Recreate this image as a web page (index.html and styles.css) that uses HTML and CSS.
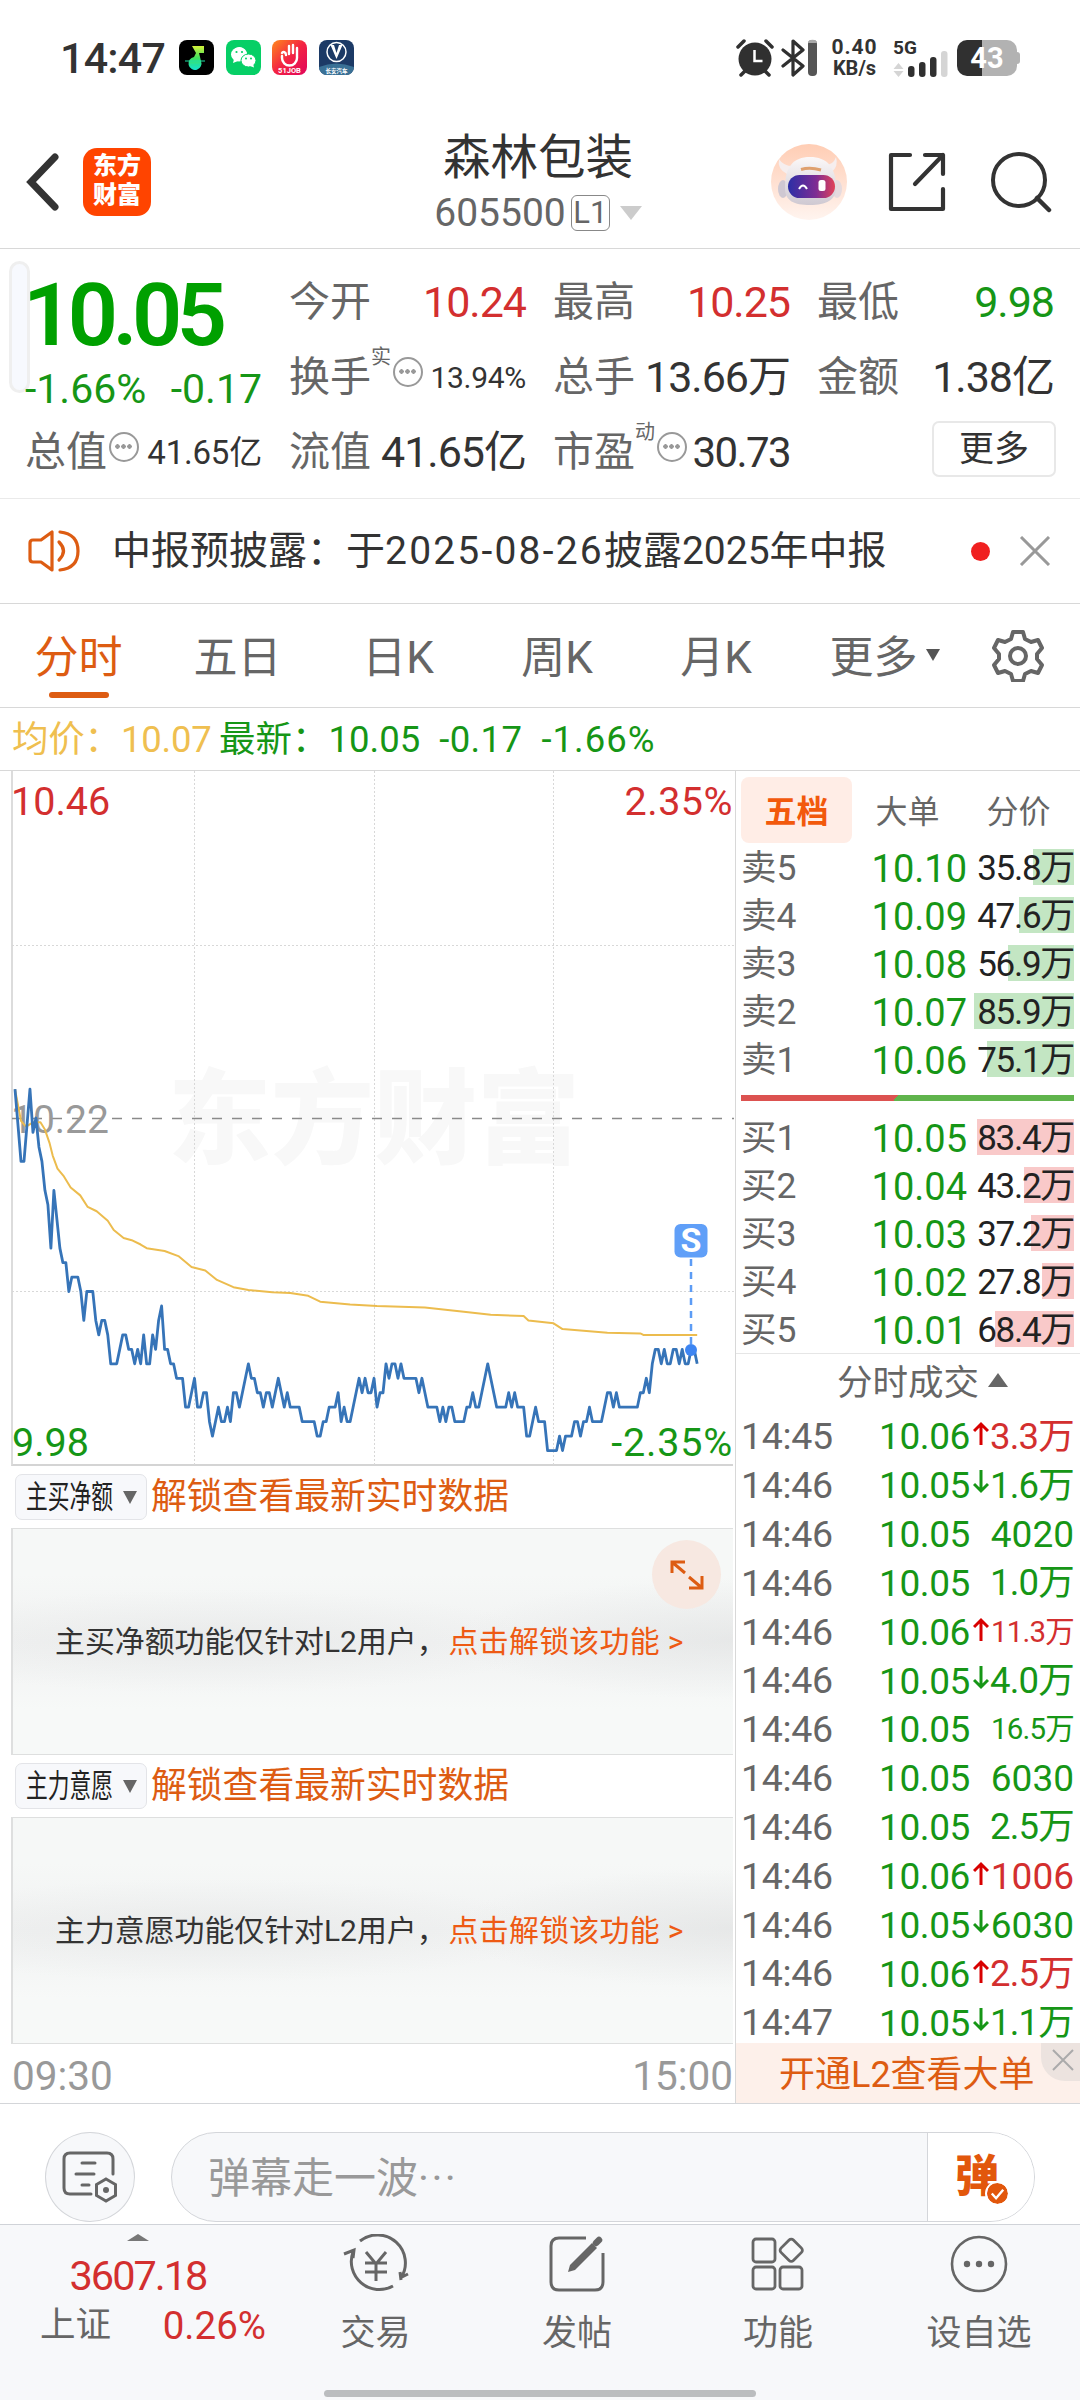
FILE: index.html
```html
<!DOCTYPE html>
<html lang="zh-CN">

<head>
  <meta charset="utf-8">
  <title>森林包装 605500</title>
  <meta name="viewport" content="width=1080">
  <link rel="stylesheet" href="styles.css">
</head>

<body>
  <!-- status bar -->
  <div class="status">
    <span class="clock">14:47</span>
    <div class="apps">
      <svg width="35" height="35" viewBox="0 0 35 35">
        <defs>
          <linearGradient id="note" x1="0" y1="0" x2="0" y2="1">
            <stop offset="0" stop-color="#d6f23a" />
            <stop offset=".5" stop-color="#3fe05c" />
            <stop offset="1" stop-color="#13e3d0" />
          </linearGradient>
        </defs>
        <rect width="35" height="35" rx="8" fill="#000" />
        <path d="M13 6h12v7h-5l2 8a6.500 6.500 0 1 1-7-4l2-4z" fill="url(#note)" />
        <path d="M6 21h20M12 25h9" stroke="#1ee0a5" stroke-width="1" />
      </svg>
      <svg width="35" height="35" viewBox="0 0 35 35">
        <rect width="35" height="35" rx="8" fill="#06cf66" />
        <path d="M7 23l1-4a7.500 7 0 1 1 4 2z" fill="#fff" />
        <ellipse cx="13" cy="14.500" rx="8" ry="7" fill="#fff" />
        <ellipse cx="22.500" cy="20.500" rx="7.500" ry="6.500" fill="#fff" stroke="#06cf66" stroke-width="1" />
        <path d="M24 26l4 1.500-1-4z" fill="#fff" />
        <g fill="#06cf66">
          <circle cx="10.500" cy="12" r="1.100" />
          <circle cx="16" cy="12" r="1.100" />
          <circle cx="20" cy="18.500" r="1" />
          <circle cx="25" cy="18.500" r="1" />
        </g>
      </svg>
      <svg width="35" height="35" viewBox="0 0 35 35">
        <defs>
          <linearGradient id="job" x1="0" y1="0" x2="1" y2="1">
            <stop offset="0" stop-color="#ff8a1c" />
            <stop offset=".5" stop-color="#f32343" />
            <stop offset="1" stop-color="#e0065c" />
          </linearGradient>
        </defs>
        <rect width="35" height="35" rx="8" fill="url(#job)" />
        <path d="M10 16v2a7.500 7.500 0 0 0 15 0V8M21 13V5M17 14V6M14 15c0-3-3-4-4-2" fill="none" stroke="#fff"
          stroke-width="2.400" stroke-linecap="round" />
        <text class="app-job" x="17.500" y="32.500">51JOB</text>
      </svg>
      <svg width="35" height="35" viewBox="0 0 35 35">
        <rect width="35" height="35" rx="8" fill="#1c3a66" />
        <path d="M0 27q17-7 35 0a8 8 0 0 1-8 8H8a8 8 0 0 1-8-8z" fill="#3a7196" />
        <circle cx="17.500" cy="12" r="9.500" fill="none" stroke="#fff" stroke-width="1.500" />
        <path d="M11.500 5l6 14 6-14h-3.500l-2.500 8-2.500-8z" fill="#fff" />
        <text class="app-car" x="17.500" y="33">长安汽车</text>
      </svg>
    </div>
    <div class="signals">
      <svg width="38" height="38" viewBox="0 0 38 38">
        <circle cx="19" cy="20" r="16.500" fill="#303030" />
        <path d="M2 8l6-6M36 8l-6-6M5 36l4-4M33 36l-4-4" stroke="#303030" stroke-width="3.500" stroke-linecap="round" />
        <path d="M18.500 11v11h8" fill="none" stroke="#fff" stroke-width="2.500" />
      </svg>
      <svg class="bt" width="37" height="38" viewBox="0 0 37 38">
        <path d="M2 11l20 16-10 9V2l10 9L2 27" fill="none" stroke="#303030" stroke-width="3.200"
          stroke-linejoin="round" stroke-linecap="round" />
        <rect x="27" y="1" width="9" height="36" rx="4" fill="#555" />
        <path d="M27 4a4 3 0 0 1 9 0z" fill="#aaa" />
      </svg>
      <div class="speed"><b>0.40</b><b>KB/s</b></div>
      <svg class="cell" width="56" height="38" viewBox="0 0 56 38">
        <text class="cell-5g" x="0" y="15">5G</text>
        <path d="M.500 30l5-6 5 6zM.500 32l5 6 5-6z" fill="#d5d5d5" />
        <g fill="#303030">
          <rect x="15" y="27" width="6.500" height="11" rx="3" />
          <rect x="26" y="23" width="6.500" height="15" rx="3" />
          <rect x="37" y="18" width="6.500" height="20" rx="3" />
        </g>
        <rect x="48" y="12" width="6.500" height="26" rx="3" fill="#d5d5d5" />
      </svg>
      <div class="battery">43</div>
    </div>
  </div>

  <!-- title bar -->
  <header>
    <svg class="back" width="34" height="58" viewBox="0 0 34 58">
      <path d="M29 4L5 29l24 25" fill="none" stroke="#333" stroke-width="7" stroke-linecap="round" />
    </svg>
    <div class="logo">东方<br>财富</div>
    <div class="title">
      <h1>森林包装</h1>
      <div class="code">605500<span class="level">L1</span><i class="down"></i></div>
    </div>
    <div class="tools">
      <svg width="76" height="76" viewBox="0 0 76 76">
        <defs>
          <linearGradient id="halo" x1="0" y1="0" x2="0" y2="1">
            <stop offset="0" stop-color="#ffcdb4" />
            <stop offset="1" stop-color="#fff4ef" />
          </linearGradient>
          <linearGradient id="visor">
            <stop offset="0" stop-color="#2c2fa6" />
            <stop offset=".6" stop-color="#7e2c93" />
            <stop offset="1" stop-color="#e24258" />
          </linearGradient>
          <linearGradient id="shell" x1="0" y1="0" x2="0" y2="1">
            <stop offset="0" stop-color="#fbf8f8" />
            <stop offset="1" stop-color="#cfc9d2" />
          </linearGradient>
        </defs>
        <circle cx="38" cy="38" r="38" fill="url(#halo)" />
        <path d="M8 15q-2 10 8 15l8-8q-11 1-16-7zM65 13q3 9-5 16l-8-8q10 1 13-8z" fill="#f6eeee" />
        <ellipse cx="12" cy="45" rx="5" ry="9" fill="#cfc8d2" />
        <ellipse cx="66" cy="45" rx="5" ry="9" fill="#e5dade" />
        <path d="M14 44c0-21 8-31 25-31s26 10 26 31c0 12-10 17-26 17s-25-4-25-17z" fill="url(#shell)" />
        <path d="M30 25.500q9-2.500 20 .500" fill="none" stroke="#dfa06e" stroke-width="3" />
        <rect x="17" y="31" width="47" height="23" rx="11.500" fill="url(#visor)" />
        <path d="M28 45q4-7 8 0" fill="none" stroke="#fff" stroke-width="2" />
        <rect x="47.500" y="36" width="7" height="11" rx="2.500" fill="#fff" />
      </svg>
      <svg width="58" height="60" viewBox="0 0 58 60">
        <path d="M22 3H3v54h52V37M37 3h18v19M55 3L27 32" fill="none" stroke="#333" stroke-width="4.200"
          stroke-linejoin="round" stroke-linecap="round" />
      </svg>
      <svg class="search" width="62" height="62" viewBox="0 0 62 62">
        <circle cx="29" cy="29" r="26" fill="none" stroke="#333" stroke-width="4" />
        <path d="M47 47l12 12" stroke="#333" stroke-width="4.500" stroke-linecap="round" />
      </svg>
    </div>
  </header>

  <!-- quote -->
  <section class="quote">
    <div class="drawer-handle"></div>
    <div class="now">
      <strong>10.05</strong>
      <div><span>-1.66%</span><span>-0.17</span></div>
    </div>
    <div class="cell-q"><label>今开</label><span class="val up">10.24</span></div>
    <div class="cell-q"><label>最高</label><span class="val up">10.25</span></div>
    <div class="cell-q"><label>最低</label><span class="val dn">9.98</span></div>
    <div class="cell-q"><label>换手<sup>实</sup></label><i class="dots"></i><span class="val pct">13.94%</span></div>
    <div class="cell-q"><label>总手</label><span class="val">13.66万</span></div>
    <div class="cell-q"><label>金额</label><span class="val">1.38亿</span></div>
    <div class="cell-q"><label>总值</label><i class="dots"></i><span class="val small">41.65亿</span></div>
    <div class="cell-q"><label>流值</label><span class="val">41.65亿</span></div>
    <div class="cell-q"><label>市盈<sup>动</sup></label><i class="dots"></i><span class="val pe">30.73</span></div>
    <button class="more">更多</button>
  </section>

  <!-- announcement -->
  <div class="notice">
    <svg width="52" height="44" viewBox="0 0 52 44">
      <g fill="none" stroke="#dd5c12" stroke-width="3.200" stroke-linejoin="round" stroke-linecap="round">
        <path d="M24 3v38L13 33H5q-3 0-3-3V14q0-3 3-3h8z" />
        <path d="M31 13q9 9 0 18M32 3q18 2 18 19T32 41" />
      </g>
    </svg>
    <p>中报预披露：于<span>2025-08-26</span>披露2025年中报</p>
    <i class="dot"></i>
    <svg class="close" width="32" height="30" viewBox="0 0 32 30">
      <path d="M2 1l28 28M30 1L2 29" stroke="#999" stroke-width="3" />
    </svg>
  </div>

  <!-- period tabs -->
  <nav class="tabs">
    <a class="on">分时</a>
    <a>五日</a>
    <a>日K</a>
    <a>周K</a>
    <a>月K</a>
    <a>更多<i></i></a>
    <svg width="52" height="52" viewBox="0 0 52 52">
      <g fill="none" stroke="#666" stroke-width="4" stroke-linejoin="round">
        <path d="M21 2h10l2 7 6 3 7-2 4 8-5 6v5l5 6-4 8-7-2-6 3-2 7H21l-2-7-6-3-7 2-4-8 5-6v-5l-5-6 4-8 7 2 6-3z" />
        <circle cx="26" cy="26" r="8" />
      </g>
    </svg>
  </nav>

  <div class="summary">
    <span class="avg">均价：10.07</span>
    <span>最新：10.05</span>
    <span class="chg">-0.17</span>
    <span class="chg rate">-1.66%</span>
  </div>

  <main>
    <div class="left">
      <!-- 1 unit on x = 1 minute, 1 unit on y = 0.01 -->
      <div class="chart">
        <svg width="722" height="694" viewBox="0 0 722 694">
          <text class="watermark" x="362" y="385">东方财富</text>
          <path d="M182.500 0v694M362.500 0v694M541.500 0v694M0 174.500h722M0 520.500h722" stroke="#d8d8d8"
            stroke-dasharray="2 2" />
          <path d="M0 347.500h722" stroke="#8a8a8a" stroke-width="1.600" stroke-dasharray="10 10" />
          <text class="mid" x="-1" y="362">10.22</text>
          <g transform="translate(3 347) scale(2.992 14.460)" fill="none" stroke-linejoin="round">
            <polyline vector-effect="non-scaling-stroke" stroke="#ecbc4e" stroke-width="2"
              points="0,-2 2,.2 3.700,.6 6,.3 8.500,.3 10,.8 11.500,1.700 12.600,2.600 14.200,3.500 16.200,4 18.600,4.800 21.800,5.350 24.300,6.150 27.300,6.450 31,7.100 33,7.750 36.300,8.300 39,8.450 42,8.750 44,9 50,9.200 54.600,9.550 59,10.300 63.600,10.550 67.500,11.200 73,11.700 78,11.900 86,12.050 92,12.100 98,12.300 102,12.700 112,12.900 121,13 137,13.100 150,13.400 159,13.600 170,13.700 171.600,14 180,14.200 183,14.600 198,14.850 209,14.900 210,15 228,15" />
            <polyline vector-effect="non-scaling-stroke" stroke="#3674b8" stroke-width="2.800"
              points="0,-2 2,3 3,3 5,-2 6,1 7,0 8,2 9,3 10,5 11,6 12,9 13,5 14,7 15,9 16,10 17,10 18,12 19,11 21,11 22,12 23,14 24,12 26,12 27,14 28,15 29,14 30,14 31,15 32,17 34,17 35,16 36,15 37,15 38,16 39,16 40,17 41,16 42,17 43,15 44,17 45,17 46,15 47,16 48,14 49,13 50,16 51,16 52,17 53,17 54,18 56,18 57,20 58,20 59,19 60,18 61,20 62,20 63,19 64,19 65,21 66,22 67,21 68,20 69,21 70,21 71,20 72,21 73,19 74,19 75,20 76,19 77,18 78,17 79,18 80,18 81,19 82,19 83,20 84,19 85,19 86,20 87,19 88,18 89,19 90,20 91,19 92,20 95,20 96,21 100,21 101,22 102,22 103,21 104,21 105,20 107,20 108,19 109,21 110,20 111,21 112,21 113,20 114,19 115,18 116,19 117,18 118,19 119,19 120,18 121,20 122,19 123,19 124,17 125,18 126,17 127,17 128,18 129,17 130,18 134,18 135,19 136,18 137,19 138,20 141,20 142,21 143,20 144,21 145,20 146,20 147,21 150,21 151,20 152,20 153,19 154,20 155,20 156,19 157,18 158,17 159,18 160,19 161,20 164,20 165,19 166,20 167,19 168,20 170,20 171,22 172,22 173,21 174,20 175,21 177,21 178,23 181,23 182,22 183,23 184,22 186,22 187,21 188,21 189,22 190,21 191,21 192,20 193,21 196,21 197,20 198,19 199,19 200,20 201,19 202,20 208,20 209,19 210,19 211,18 212,19 213,17 214,16 215,16 216,17 217,16 218,17 219,17 220,16 221,16 222,17 223,16 224,17 225,17 226,16 227,16 228,17" />
          </g>
          <path d="M679 488v88" stroke="#5c9cf5" stroke-width="2.500" stroke-dasharray="7 6" />
          <circle cx="679" cy="579" r="6" fill="#3d85f2" />
          <rect x="662.500" y="453" width="33" height="33.500" rx="6" fill="#609ff8" />
          <text class="sell" x="679" y="480.500">S</text>
        </svg>
        <span class="tl up">10.46</span>
        <span class="tr up">2.35%</span>
        <span class="bl dn">9.98</span>
        <span class="br dn">-2.35%</span>
      </div>

      <div class="sub-head">
        <button><span>主买净额</span><i></i></button>
        <a>解锁查看最新实时数据</a>
      </div>
      <div class="locked">
        <p>主买净额功能仅针对L2用户，<a>点击解锁该功能 &gt;</a></p>
        <div class="expand">
          <svg width="36" height="38" viewBox="0 0 36 38">
            <path d="M3 17V6h13M3 6l13 11M33 20v12H20M33 32L20 21" fill="none" stroke="#dd5c12" stroke-width="3" />
          </svg>
        </div>
      </div>

      <div class="sub-head">
        <button><span>主力意愿</span><i></i></button>
        <a>解锁查看最新实时数据</a>
      </div>
      <div class="locked">
        <p>主力意愿功能仅针对L2用户，<a>点击解锁该功能 &gt;</a></p>
      </div>

      <div class="axis"><span>09:30</span><span>15:00</span></div>
    </div>

    <aside>
      <div class="book-tabs"><a class="on">五档</a><a>大单</a><a>分价</a></div>
      <div class="book sells">
        <div><label>卖5</label><b>10.10</b><span><i style="width:41px"></i>35.8万</span></div>
        <div><label>卖4</label><b>10.09</b><span><i style="width:55px"></i>47.6万</span></div>
        <div><label>卖3</label><b>10.08</b><span><i style="width:66px"></i>56.9万</span></div>
        <div><label>卖2</label><b>10.07</b><span><i style="width:100px"></i>85.9万</span></div>
        <div><label>卖1</label><b>10.06</b><span><i style="width:87px"></i>75.1万</span></div>
      </div>
      <div class="ratio"></div>
      <div class="book buys">
        <div><label>买1</label><b>10.05</b><span><i style="width:97px"></i>83.4万</span></div>
        <div><label>买2</label><b>10.04</b><span><i style="width:50px"></i>43.2万</span></div>
        <div><label>买3</label><b>10.03</b><span><i style="width:43px"></i>37.2万</span></div>
        <div><label>买4</label><b>10.02</b><span><i style="width:32px"></i>27.8万</span></div>
        <div><label>买5</label><b>10.01</b><span><i style="width:79px"></i>68.4万</span></div>
      </div>
      <div class="deals-head">分时成交<i></i></div>
      <div class="deals">
        <div><label>14:45</label><b>10.06</b><svg class="a-up"><use href="#arrow" /></svg><span class="up">3.3万</span></div>
        <div><label>14:46</label><b>10.05</b><svg class="a-dn"><use href="#arrow" /></svg><span>1.6万</span></div>
        <div><label>14:46</label><b>10.05</b><svg></svg><span class="num">4020</span></div>
        <div><label>14:46</label><b>10.05</b><svg></svg><span>1.0万</span></div>
        <div><label>14:46</label><b>10.06</b><svg class="a-up"><use href="#arrow" /></svg><span class="up fit">11.3万</span></div>
        <div><label>14:46</label><b>10.05</b><svg class="a-dn"><use href="#arrow" /></svg><span>4.0万</span></div>
        <div><label>14:46</label><b>10.05</b><svg></svg><span class="fit">16.5万</span></div>
        <div><label>14:46</label><b>10.05</b><svg></svg><span class="num">6030</span></div>
        <div><label>14:46</label><b>10.05</b><svg></svg><span>2.5万</span></div>
        <div><label>14:46</label><b>10.06</b><svg class="a-up"><use href="#arrow" /></svg><span class="up num">1006</span></div>
        <div><label>14:46</label><b>10.05</b><svg class="a-dn"><use href="#arrow" /></svg><span class="num">6030</span></div>
        <div><label>14:46</label><b>10.06</b><svg class="a-up"><use href="#arrow" /></svg><span class="up">2.5万</span></div>
        <div><label>14:47</label><b>10.05</b><svg class="a-dn"><use href="#arrow" /></svg><span>1.1万</span></div>
      </div>
      <div class="promo">
        开通L2查看大单
        <div class="promo-x">
          <svg width="22" height="22" viewBox="0 0 22 22">
            <path d="M1 1l20 20M21 1L1 21" stroke="#aaa" stroke-width="2" />
          </svg>
        </div>
      </div>
    </aside>
  </main>

  <!-- danmaku bar -->
  <div class="comment">
    <div class="comment-set">
      <svg width="56" height="52" viewBox="0 0 56 52">
        <g fill="none" stroke="#666" stroke-width="3" stroke-linecap="round">
          <path d="M29 43H8q-6 0-6-6V8q0-6 6-6h37q6 0 6 6v15" />
          <path d="M20 12h13M14 23h18M20 34h7" />
          <path d="M44 28l9.500 5.500v11L44 50l-9.500-5.500v-11z" />
        </g>
        <circle cx="44" cy="39" r="3" fill="#666" />
      </svg>
    </div>
    <div class="comment-box">
      <p>弹幕走一波<span>···</span></p>
      <div class="send">
        弹
        <svg width="22" height="22" viewBox="0 0 22 22">
          <circle cx="11" cy="11" r="11" fill="#e2570c" />
          <path d="M5 11l4.500 5L17 7" fill="none" stroke="#fff" stroke-width="2.500" />
        </svg>
      </div>
    </div>
  </div>

  <!-- bottom bar -->
  <footer>
    <div class="index">
      <i></i>
      <strong>3607.18</strong>
      <div><span>上证</span><b>0.26%</b></div>
    </div>
    <div class="item">
      <svg width="66" height="60" viewBox="0 0 66 60">
        <g fill="none" stroke="#666" stroke-width="3">
          <path d="M17 7a28 28 0 0 1 41 37M58 46l-1-8M57 44l8-4" />
          <path d="M50 52A28 28 0 0 1 10 18M1 20l10-4-1 8" />
          <path d="M23 18l10 12 10-12M33 30v17M22 29h22M22 38h22" />
        </g>
      </svg>
      交易
    </div>
    <div class="item">
      <svg width="56" height="60" viewBox="0 0 56 60">
        <path d="M37 4H10q-8 0-8 8v36q0 8 8 8h36q8 0 8-8V19" fill="none" stroke="#666" stroke-width="3" />
        <path d="M19 38l2-7 22-22 5 5-22 22z" fill="#666" />
        <path d="M47 9l3-3" stroke="#666" stroke-width="6.500" stroke-linecap="round" />
      </svg>
      发帖
    </div>
    <div class="item">
      <svg width="56" height="60" viewBox="0 0 56 60">
        <g fill="none" stroke="#666" stroke-width="2.800">
          <rect x="3" y="5" width="22" height="23" rx="3" />
          <rect x="3" y="33" width="22" height="22" rx="3" />
          <rect x="30" y="33" width="22" height="22" rx="3" />
          <rect x="32.500" y="7.500" width="17.500" height="17.500" rx="3" transform="rotate(45 41.250 16.250)" />
        </g>
      </svg>
      功能
    </div>
    <div class="item">
      <svg width="58" height="60" viewBox="0 0 58 60">
        <circle cx="29" cy="30" r="27" fill="none" stroke="#666" stroke-width="2.600" />
        <g fill="#666">
          <circle cx="17" cy="30" r="3.200" />
          <circle cx="29" cy="30" r="3.200" />
          <circle cx="41" cy="30" r="3.200" />
        </g>
      </svg>
      设自选
    </div>
    <div class="home-bar"></div>
  </footer>

  <svg class="defs">
    <symbol id="arrow" viewBox="0 0 16 24">
      <path d="M8 24V3M1 10l7-7 7 7" fill="none" stroke="currentColor" stroke-width="3" />
    </symbol>
  </svg>
</body>

</html>
```
FILE: styles.css
```css
* {
  box-sizing: border-box;
}

body {
  margin: 0;
  width: 1080px;
  height: 2400px;
  overflow: hidden;
  display: flex;
  flex-direction: column;
  background-color: #fff;
  color: #333;
  font-family: Roboto, "Noto Sans CJK SC", sans-serif;
  line-height: 1;
}

h1, p, sup {
  margin: 0;
  font-weight: normal;
}

i {
  display: block;
  flex-shrink: 0;
}

svg {
  display: block;
  flex-shrink: 0;
}

button {
  font-family: inherit;
  line-height: 1;
  padding: 0;
}

.defs {
  position: absolute;
  width: 0;
  height: 0;
}

.up {
  color: #d32f2f;
}

.dn {
  color: #169616;
}

/* status bar */
.status {
  height: 115px;
  flex-shrink: 0;
  display: flex;
  align-items: center;
  padding: 0 63px 0 60px;
}

.clock {
  width: 119px;
  padding-top: 2px;
  font-size: 43px;
  font-weight: 500;
  letter-spacing: -0.8px;
}

.apps {
  display: flex;
  gap: 11.700px;
}

.app-job {
  font-size: 7.500px;
  font-weight: bold;
  fill: #fff;
  text-anchor: middle;
}

.app-car {
  font-size: 5.500px;
  font-weight: bold;
  fill: #fff;
  text-anchor: middle;
}

.signals {
  margin-left: auto;
  display: flex;
  align-items: center;
}

.bt {
  margin-left: 7px;
}

.speed {
  width: 49px;
  margin: 0 14px 0 12px;
  height: 42px;
  display: flex;
  flex-direction: column;
  align-items: center;
  font-size: 20px;
  line-height: 21px;
}

.speed b:first-child {
  font-size: 21px;
  letter-spacing: 1px;
}

.cell {
  overflow: visible;
}

.cell-5g {
  font-size: 19px;
  font-weight: bold;
  fill: #303030;
}

.battery {
  margin-left: 8px;
  width: 60px;
  height: 36px;
  border-radius: 10px;
  background: linear-gradient(90deg, #303030 25px, #b2b2b2 25px);
  color: #fff;
  font-size: 29px;
  font-weight: bold;
  line-height: 37px;
  text-align: center;
  position: relative;
}

.battery::after {
  content: "";
  position: absolute;
  right: -3px;
  top: 12px;
  width: 4px;
  height: 12px;
  border-radius: 0 3px 3px 0;
  background-color: #b2b2b2;
}

/* title bar */
header {
  height: 134px;
  flex-shrink: 0;
  display: flex;
  align-items: center;
  padding: 0 28px 0 26px;
  border-bottom: 1px solid #d8d8d8;
}

.logo {
  width: 68px;
  height: 68px;
  margin-left: 23px;
  border-radius: 14px;
  background-color: #ff4400;
  color: #fff;
  font-size: 24px;
  font-weight: 900;
  line-height: 29px;
  text-align: center;
  padding-top: 4px;
}

.title {
  flex: 1;
  display: flex;
  flex-direction: column;
  align-items: center;
  padding-right: 8px;
  padding-left: 162px;
}

h1 {
  font-size: 47.500px;
  line-height: 58px;
}

.code {
  display: flex;
  align-items: center;
  height: 48px;
  padding-top: 5px;
  font-size: 39px;
  color: #666;
}

.level {
  width: 39px;
  height: 36px;
  margin-left: 5px;
  border: 1.500px solid #888;
  border-radius: 6px;
  font-size: 31px;
  line-height: 34px;
  text-align: center;
}

.down {
  margin-left: 10px;
  border: 11px solid transparent;
  border-top: 14px solid #ccc;
  border-bottom: 0;
}

.tools {
  display: flex;
  align-items: center;
  gap: 41px;
  margin-left: auto;
}

.search {
  margin-left: 3px;
}

/* quote */
.quote {
  position: relative;
  height: 250px;
  flex-shrink: 0;
  display: grid;
  grid-template-columns: repeat(4, 237px);
  grid-template-rows: repeat(3, 75px);
  column-gap: 27px;
  padding: 16px 25px 0;
  border-bottom: 1px solid #eaeaea;
}

.drawer-handle {
  position: absolute;
  left: 9px;
  top: 12px;
  width: 21px;
  height: 132px;
  border: 3px solid #efefef;
  border-radius: 11px;
  background-color: #f7f9fe;
}

.now {
  grid-row: span 2;
  position: relative;
  color: #00a000;
}

.now strong {
  display: block;
  height: 100px;
  font-size: 88px;
  font-weight: 600;
  line-height: 100px;
  letter-spacing: -5.500px;
  margin-left: -2px;
}

.now div {
  display: flex;
  justify-content: space-between;
  padding-top: 4px;
  font-size: 41px;
  color: #169616;
}

.cell-q {
  display: flex;
  align-items: center;
}

.cell-q label {
  position: relative;
  flex-shrink: 0;
  font-size: 41px;
  color: #666;
  white-space: nowrap;
}

.cell-q sup {
  position: absolute;
  left: 82px;
  top: -10px;
  font-size: 20px;
  line-height: 20px;
}

.val {
  margin-left: auto;
  font-size: 43px;
  letter-spacing: -1px;
  white-space: nowrap;
}

.val.small {
  font-size: 33px;
  letter-spacing: -0.2px;
}

.val.pct {
  font-size: 30px;
  letter-spacing: -0.3px;
}

.val.pe {
  font-size: 42px;
  letter-spacing: -1.600px;
}

.dots {
  width: 30px;
  height: 30px;
  margin-left: 2px;
  margin-bottom: 11px;
  border: 2.500px solid #999;
  border-radius: 50%;
  background: radial-gradient(circle at 6.500px 12.500px, #999 2px, transparent 2.500px),
    radial-gradient(circle at 12.500px 12.500px, #999 2px, transparent 2.500px),
    radial-gradient(circle at 18.500px 12.500px, #999 2px, transparent 2.500px);
}

label:has(sup)+.dots {
  margin-left: 22px;
}

.more {
  width: 124px;
  height: 56px;
  margin-left: 115px;
  margin-bottom: 7px;
  align-self: center;
  border: 2px solid #e8e8e8;
  border-radius: 7px;
  background-color: #fff;
  color: #333;
  font-size: 35px;
}

/* announcement */
.notice {
  height: 105px;
  flex-shrink: 0;
  display: flex;
  align-items: center;
  padding: 0 29px 0 28px;
  border-bottom: 1px solid #d8d8d8;
}

.notice p {
  margin-left: 32px;
  padding-top: 1px;
  font-size: 39px;
  white-space: nowrap;
}

.notice p span {
  letter-spacing: 2.200px;
}

.dot {
  width: 19px;
  height: 19px;
  margin-left: auto;
  border-radius: 50%;
  background-color: #f02020;
}

.close {
  margin-left: 29px;
}

/* period tabs */
.tabs {
  height: 104px;
  flex-shrink: 0;
  display: grid;
  grid-template-columns: 157px 161px 160px 158px 160px 177px 1fr;
  align-items: center;
  border-bottom: 1px solid #d8d8d8;
  color: #666;
  font-size: 44px;
}

.tabs a {
  position: relative;
  display: flex;
  align-items: center;
  justify-content: center;
  padding-top: 5px;
}

.tabs a.on {
  color: #dd5c12;
}

.tabs a.on::after {
  content: "";
  position: absolute;
  left: 49px;
  top: 61px;
  width: 60px;
  height: 6px;
  border-radius: 3px;
  background-color: #dd5c12;
}

.tabs i {
  margin-left: 8px;
  margin-bottom: 7px;
  border: 7.500px solid transparent;
  border-top: 12px solid #555;
  border-bottom: 0;
}

.tabs svg {
  margin-left: 19px;
}

.summary {
  height: 63px;
  flex-shrink: 0;
  display: flex;
  align-items: center;
  padding: 3px 0 0 12px;
  border-bottom: 1px solid #d8d8d8;
  color: #169616;
  font-size: 36.500px;
}

.summary .avg {
  width: 207px;
  letter-spacing: -0.2px;
  color: #efbf50;
}

.summary .chg {
  margin-left: 19px;
  letter-spacing: 0.4px;
}

.summary .rate {
  letter-spacing: 1px;
}

main {
  height: 1333px;
  flex-shrink: 0;
  display: flex;
  border-bottom: 1px solid #d4d6d9;
}

.left {
  width: 735px;
  padding-left: 11px;
}

.chart {
  position: relative;
  width: 722px;
  height: 695px;
  border-left: 2px solid #dcdcdc;
  border-bottom: 2px solid #d4d4d4;
  font-size: 39.500px;
}

.chart svg {
  margin-left: -1px;
  overflow: visible;
}

.chart span {
  position: absolute;
}

.tl {
  left: -2px;
  top: 11px;
}

.tr {
  right: 0;
  top: 11px;
  letter-spacing: 0.5px;
}

.bl {
  left: -1px;
  bottom: 2px;
}

.br {
  right: 0;
  bottom: 2px;
  letter-spacing: 0.8px;
}

.watermark {
  font-size: 103px;
  font-weight: 900;
  fill: #f8f8f8;
  text-anchor: middle;
}

.mid {
  font-size: 39px;
  fill: #999;
}

.sell {
  font-size: 34px;
  font-weight: bold;
  fill: #fff;
  text-anchor: middle;
}

.sub-head {
  height: 62px;
  display: flex;
  align-items: center;
  padding-left: 4px;
  color: #dd5c12;
  font-size: 35.800px;
}

.sub-head a {
  padding-top: 2px;
}

.sub-head button {
  width: 132px;
  height: 46px;
  display: flex;
  align-items: center;
  padding-left: 10px;
  margin-right: 4px;
  border: 1px solid #e3e4e8;
  border-radius: 7px;
  background-color: #f7f8fb;
}

/* four characters squeezed into the tag */
.sub-head button span {
  width: 97px;
  font-size: 32px;
  color: #222;
  white-space: nowrap;
  transform: scaleX(0.68);
  transform-origin: left;
}

.sub-head button i {
  border: 7.500px solid transparent;
  border-top: 13px solid #666;
  border-bottom: 0;
}

.locked {
  position: relative;
  width: 722px;
  height: 227px;
  display: flex;
  align-items: center;
  padding-left: 42px;
  border: 1.500px solid #dedfdf;
  border-left-width: 2px;
  border-right: 0;
  background: radial-gradient(ellipse 340px 52px at 28% 50%, rgba(215, 217, 217, 0.320), transparent),
    radial-gradient(ellipse 280px 60px at 100% 49%, rgba(215, 217, 217, 0.400), transparent),
    linear-gradient(#f6f8f7 20%, #f1f2f2 50%, #f7f9f8 80%);
}

.locked p {
  font-size: 29.900px;
  white-space: nowrap;
}

.locked a {
  margin-left: 2px;
  letter-spacing: 0.3px;
  color: #ee5a14;
}

.expand {
  position: absolute;
  right: 12px;
  top: 11px;
  width: 69px;
  height: 69px;
  display: flex;
  align-items: center;
  justify-content: center;
  border-radius: 50%;
  background-color: #f7e8e1;
}

.axis {
  height: 60px;
  display: flex;
  align-items: center;
  justify-content: space-between;
  padding: 4px 2px 0 1px;
  color: #999;
  font-size: 40.500px;
}

/* order book */
aside {
  width: 345px;
  border-left: 1px solid #d8d8d8;
}

.book-tabs {
  display: flex;
  padding: 6px 0 0 5px;
  font-size: 32px;
  color: #666;
}

.book-tabs a {
  width: 111px;
  height: 66px;
  line-height: 70px;
  text-align: center;
  border-radius: 8px;
}

.book-tabs .on {
  background-color: #ffede6;
  color: #f2590c;
  font-weight: bold;
}

.book {
  padding: 0 6px 0 5px;
}

.book div,
.deals div {
  display: flex;
  align-items: center;
  height: 48px;
  color: #666;
}

.book label {
  width: 110px;
  padding-top: 3px;
  font-size: 35.500px;
}

.book b,
.deals b {
  width: 116px;
  padding-top: 3px;
  text-align: right;
  color: #169616;
  font-size: 38px;
  font-weight: normal;
}

.book span {
  position: relative;
  z-index: 0;
  width: 107px;
  height: 36px;
  line-height: 39px;
  text-align: right;
  color: #222;
  font-size: 35px;
  letter-spacing: -1.300px;
}

/* volume bar behind the size */
.book span i {
  position: absolute;
  z-index: -1;
  right: 0;
  top: 0;
  height: 36px;
}

.sells {
  height: 240px;
}

.sells i {
  background-color: #c3e6c3;
}

.buys i {
  background-color: #f9c9c9;
}

.ratio {
  height: 6px;
  margin: 12px 6px 12px 5px;
  background: linear-gradient(130deg, #dc5250 46.500%, #60b44c 46.500%);
}

.deals-head {
  height: 58px;
  display: flex;
  align-items: center;
  justify-content: center;
  border-top: 1px solid #e6e6e6;
  padding: 2px 0 0 29px;
  color: #666;
  font-size: 35.500px;
}

.deals-head i {
  margin-left: 9px;
  margin-bottom: 7px;
  border: 10px solid transparent;
  border-bottom: 14px solid #666;
  border-top: 0;
}

.deals {
  padding: 0 6px 0 5px;
}

.deals div {
  height: 48.850px;
}

.deals label {
  width: 100px;
  padding-top: 3px;
  font-size: 37.500px;
  letter-spacing: -0.3px;
}

.deals b {
  width: 129px;
  font-size: 37px;
  letter-spacing: -0.4px;
}

.deals svg {
  width: 16px;
  height: 24px;
  margin: 0 1px 4px 3px;
}

.a-up {
  color: #d80000;
}

.a-dn {
  color: #169616;
  transform: rotate(180deg);
}

.deals span {
  flex: 1;
  padding-top: 3px;
  text-align: right;
  white-space: nowrap;
  color: #169616;
  font-size: 36.500px;
  letter-spacing: -0.8px;
}

.deals span.up {
  color: #d32f2f;
}

.deals span.num {
  font-size: 37px;
  letter-spacing: 0;
}

.deals span.fit {
  font-size: 29.500px;
}

.promo {
  position: relative;
  height: 60px;
  margin-top: -3px;
  padding-left: 43px;
  background-color: #fdf0ea;
  color: #dd5c12;
  font-size: 36px;
  line-height: 64px;
  white-space: nowrap;
}

.promo-x {
  position: absolute;
  right: 0;
  top: 0;
  width: 39px;
  height: 38px;
  padding: 6px 0 0 11px;
  border-radius: 0 0 0 24px;
  background-color: #ece3df;
}

/* danmaku bar */
.comment {
  height: 121px;
  flex-shrink: 0;
  display: flex;
  padding: 28px 45px 0;
  border-bottom: 1px solid #d0d3d8;
}

.comment-set {
  width: 90px;
  height: 90px;
  display: flex;
  align-items: center;
  justify-content: center;
  border: 1.500px solid #d4d6da;
  border-radius: 50%;
  background-color: #f7f8fa;
}

.comment-box {
  width: 865px;
  height: 90px;
  margin-left: 36px;
  display: flex;
  align-items: center;
  overflow: hidden;
  border: 1.500px solid #d4d6da;
  border-radius: 45px;
  background-color: #f7f8fa;
  color: #999;
  font-size: 42px;
}

.comment-box p {
  flex: 1;
  padding: 4px 0 0 36px;
}

.comment-box span {
  letter-spacing: 2.500px;
}

.send {
  position: relative;
  width: 107px;
  height: 90px;
  padding-left: 27px;
  border-left: 1.500px solid #d4d6da;
  background-color: #fff;
  color: #e2570c;
  font-size: 44px;
  font-weight: 900;
  line-height: 90px;
}

.send svg {
  position: absolute;
  left: 57px;
  top: 49px;
  border: 2px solid #fff;
  border-radius: 50%;
  width: 25px;
  height: 25px;
}

/* bottom bar */
footer {
  position: relative;
  height: 175px;
  display: grid;
  grid-template-columns: 275px 201px 202px 200px 202px;
  background-color: #f7f8fa;
  color: #666;
}

.index {
  display: flex;
  flex-direction: column;
  align-items: center;
  width: 276px;
  padding-top: 9px;
}

.index i {
  border: 11px solid transparent;
  border-bottom: 7px solid #777;
  border-top: 0;
}

.index strong {
  margin-top: 14px;
  color: #d32f2f;
  font-size: 41.500px;
  font-weight: normal;
  letter-spacing: -2px;
}

.index div {
  display: flex;
  align-items: center;
  justify-content: space-between;
  width: 226px;
  margin: 10px 0 0 30px;
  font-size: 35.500px;
}

.index b {
  color: #d32f2f;
  font-size: 38.500px;
  font-weight: normal;
}

.item {
  display: flex;
  flex-direction: column;
  align-items: center;
  padding-top: 9px;
  gap: 22px;
  font-size: 35px;
}

.home-bar {
  position: absolute;
  left: 324px;
  bottom: 3px;
  width: 432px;
  height: 7px;
  border-radius: 4px;
  background-color: #bbbdbf;
}
```
